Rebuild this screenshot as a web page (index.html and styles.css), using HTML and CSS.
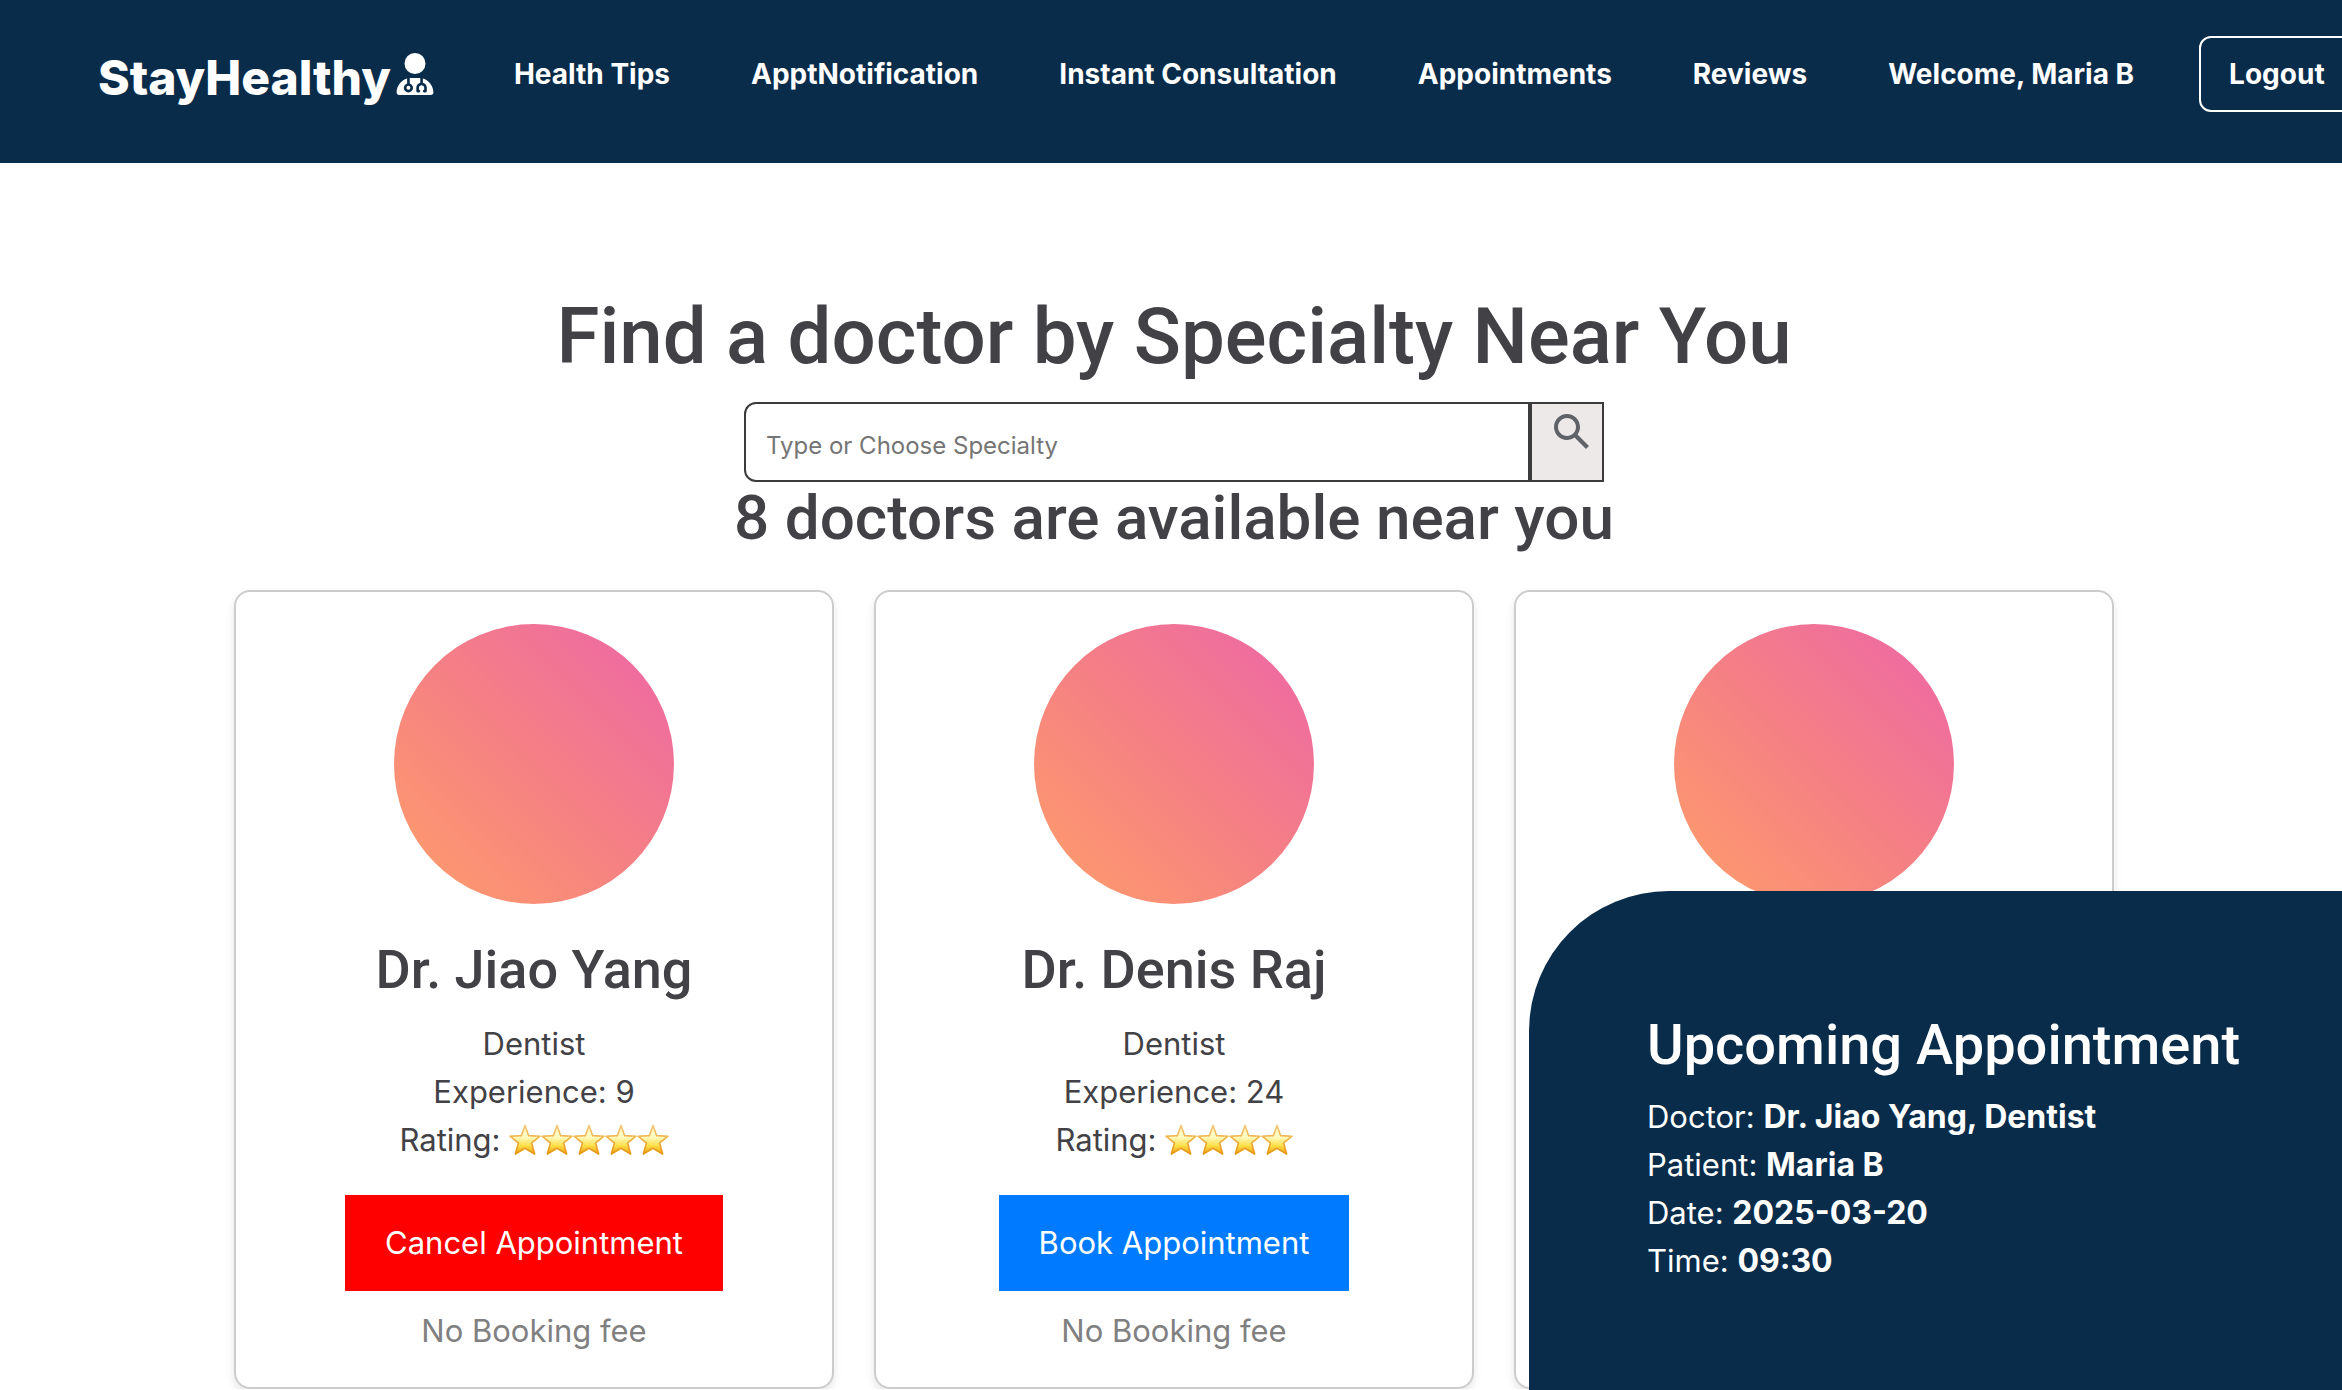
FILE: index.html
```html
<!DOCTYPE html>
<html lang="en">
<head>
  <meta charset="utf-8">
  <title>StayHealthy</title>
  <link rel="stylesheet" href="styles.css">
</head>
<body>
  <svg class="defs" width="0" height="0" aria-hidden="true">
    <defs>
      <linearGradient id="gold" x1="0" y1="0" x2="0" y2="1">
        <stop offset="0" stop-color="#fff6c0"/>
        <stop offset="0.4" stop-color="#fffbc4"/>
        <stop offset="0.7" stop-color="#fce04a"/>
        <stop offset="1" stop-color="#f2a011"/>
      </linearGradient>
      <linearGradient id="gold-edge" x1="0" y1="0" x2="0" y2="1">
        <stop offset="0" stop-color="#f3c877"/>
        <stop offset="1" stop-color="#e8960f"/>
      </linearGradient>
      <symbol id="star" viewBox="0 0 32 32">
        <path d="M16 1.5 L19.6 11.6 L31 12.2 L22.6 18.8 L25.6 30 L16 24.2 L6.4 30 L9.4 18.8 L1 12.2 L12.4 11.6 Z" fill="url(#gold)" stroke="url(#gold-edge)" stroke-width="1.6" stroke-linejoin="round"/>
      </symbol>
    </defs>
  </svg>

  <header class="navbar">
    <a class="logo" href="#">StayHealthy<svg class="logo-icon" viewBox="0 0 448 512" aria-hidden="true"><path fill="currentColor" d="M224 256a128 128 0 1 0 0-256 128 128 0 1 0 0 256zm-96 55.2C54 332.9 0 401.3 0 482.3C0 498.7 13.3 512 29.7 512l388.6 0c16.4 0 29.7-13.3 29.7-29.7c0-81-54-149.4-128-171.1l0 50.8c27.6 7.1 48 32.2 48 62l0 40c0 8.8-7.2 16-16 16l-16 0c-8.8 0-16-7.2-16-16s7.2-16 16-16l0-24c0-17.7-14.3-32-32-32s-32 14.3-32 32l0 24c8.8 0 16 7.2 16 16s-7.2 16-16 16l-16 0c-8.8 0-16-7.2-16-16l0-40c0-29.8 20.4-54.9 48-62l0-57.1c-6-.6-12.1-.9-18.3-.9l-91.4 0c-6.2 0-12.3 .3-18.3 .9l0 65.4c23.1 6.9 40 28.3 40 53.7c0 30.9-25.1 56-56 56s-56-25.1-56-56c0-25.4 16.9-46.8 40-53.7l0-59.1zM144 448a24 24 0 1 0 0-48 24 24 0 1 0 0 48z"/></svg></a>
    <nav class="links">
      <a href="#">Health Tips</a>
      <a href="#">ApptNotification</a>
      <a href="#">Instant Consultation</a>
      <a href="#">Appointments</a>
      <a href="#">Reviews</a>
      <a href="#">Welcome, Maria B</a>
    </nav>
    <button class="logout" type="button">Logout</button>
  </header>

  <main class="page">
    <h1>Find a doctor by Specialty Near You</h1>
    <form class="search">
      <input type="text" placeholder="Type or Choose Specialty" aria-label="Specialty">
      <button type="button" aria-label="Search">
        <svg viewBox="0 0 24 24" aria-hidden="true"><path fill="currentColor" d="M20.49 19l-5.73-5.73C15.53 12.2 16 10.91 16 9.5 16 5.91 13.09 3 9.5 3S3 5.91 3 9.5 5.91 16 9.5 16c1.41 0 2.7-.47 3.77-1.24L19 20.49 20.49 19zM5 9.5C5 7.01 7.01 5 9.5 5S14 7.01 14 9.5 11.99 14 9.5 14 5 11.99 5 9.5z"/></svg>
      </button>
    </form>
    <h2>8 doctors are available near you</h2>

    <section class="doctors">
      <article class="card">
        <div class="avatar"></div>
        <h3>Dr. Jiao Yang</h3>
        <p>Dentist</p>
        <p>Experience: 9</p>
        <p class="rating">Rating: <span class="stars" role="img" aria-label="5 stars"><svg><use href="#star"/></svg><svg><use href="#star"/></svg><svg><use href="#star"/></svg><svg><use href="#star"/></svg><svg><use href="#star"/></svg></span></p>
        <button class="action cancel" type="button">Cancel Appointment</button>
        <p class="fee">No Booking fee</p>
      </article>
      <article class="card">
        <div class="avatar"></div>
        <h3>Dr. Denis Raj</h3>
        <p>Dentist</p>
        <p>Experience: 24</p>
        <p class="rating">Rating: <span class="stars" role="img" aria-label="4 stars"><svg><use href="#star"/></svg><svg><use href="#star"/></svg><svg><use href="#star"/></svg><svg><use href="#star"/></svg></span></p>
        <button class="action" type="button">Book Appointment</button>
        <p class="fee">No Booking fee</p>
      </article>
      <article class="card">
        <div class="avatar"></div>
      </article>
    </section>
  </main>

  <aside class="notice">
    <h3>Upcoming Appointment</h3>
    <p>Doctor: <strong>Dr. Jiao Yang, Dentist</strong></p>
    <p>Patient: <strong>Maria B</strong></p>
    <p>Date: <strong>2025-03-20</strong></p>
    <p>Time: <strong>09:30</strong></p>
  </aside>
</body>
</html>
```
FILE: styles.css
```css
* {
  box-sizing: border-box;
}

body {
  margin: 0;
  overflow: hidden;
  background: #fff;
  color: #424146;
  font-family: Inter, "Liberation Sans", sans-serif;
  font-size: 31px;
  line-height: 48px;
}

h1, h2, h3, p {
  margin: 0;
  font-weight: 400;
}

h1, h2, h3 {
  font-family: Roboto, Inter, sans-serif;
  font-weight: 500;
}

button, input {
  font: inherit;
}

.defs {
  position: absolute;
}

.navbar {
  display: flex;
  align-items: center;
  padding: 36px 0 51px 98px;
  background: #0a2c4b;
  color: #fff;
  font-size: 28px;
  font-weight: 700;
  white-space: nowrap;
}

.navbar a {
  color: inherit;
  text-decoration: none;
}

.logo {
  display: flex;
  align-items: baseline;
  padding-top: 7px;
  font-size: 48px;
  font-weight: 800;
}

.logo-icon {
  width: 38px;
  height: 42px;
  margin-left: 5px;
}

.links {
  display: flex;
  gap: 81px;
  margin: 0 65px 0 80px;
}

.logout {
  flex: none;
  height: 76px;
  padding: 0 28px;
  border: 2px solid #fff;
  border-radius: 12px;
  background: transparent;
  color: #fff;
}

.page {
  padding: 126px 0 0 6px;
  text-align: center;
}

h1 {
  font-size: 78px;
  line-height: 96px;
}

.search {
  display: flex;
  width: 860px;
  height: 80px;
  margin: 17px auto 0;
}

.search input {
  flex: 1;
  min-width: 0;
  padding: 8px 20px 0;
  border: 2px solid #3b3b3b;
  border-radius: 12px 0 0 12px;
  background: #fff;
  font-size: 24px;
}

.search input::placeholder {
  color: #757575;
}

.search button {
  display: flex;
  width: 74px;
  padding: 4px 6px 0 16px;
  border: 2px solid #3b3b3b;
  background: #eee9e9;
  color: #5f6368;
}

.search svg {
  flex: none;
  width: 48px;
  height: 48px;
}

h2 {
  font-size: 62px;
  line-height: 72px;
}

.doctors {
  display: flex;
  justify-content: center;
  gap: 40px;
  margin-top: 36px;
}

.card {
  display: flex;
  flex-direction: column;
  align-items: center;
  width: 600px;
  padding: 32px;
  border: 2px solid #ccc;
  border-radius: 16px;
  box-shadow: 0 4px 8px rgba(0, 0, 0, 0.1);
}

.avatar {
  width: 280px;
  height: 280px;
  border-radius: 50%;
  background: linear-gradient(45deg, #fd986e 10%, #f58084 50%, #ee6ba1 90%);
}

.card h3 {
  margin: 32px 0 16px;
  font-size: 54px;
  line-height: 68px;
}

.rating {
  display: flex;
  gap: 8px;
}

.stars {
  display: flex;
  align-items: center;
}

.stars svg {
  width: 32px;
  height: 32px;
}

.action {
  height: 96px;
  margin: 31px 0 16px;
  padding: 0 40px;
  border: 0;
  background: #007bff;
  color: #fff;
}

.cancel {
  background: #f00;
}

.fee {
  color: #808080;
}

.notice {
  position: fixed;
  right: 0;
  bottom: 0;
  min-width: 813px;
  padding: 120px 60px 105px 118px;
  border-radius: 140px 0 0 0;
  background: #0a2c4b;
  color: #fff;
}

.notice h3 {
  margin-bottom: 14px;
  font-size: 56px;
  line-height: 68px;
}

.notice strong {
  font-size: 32px;
}
```
